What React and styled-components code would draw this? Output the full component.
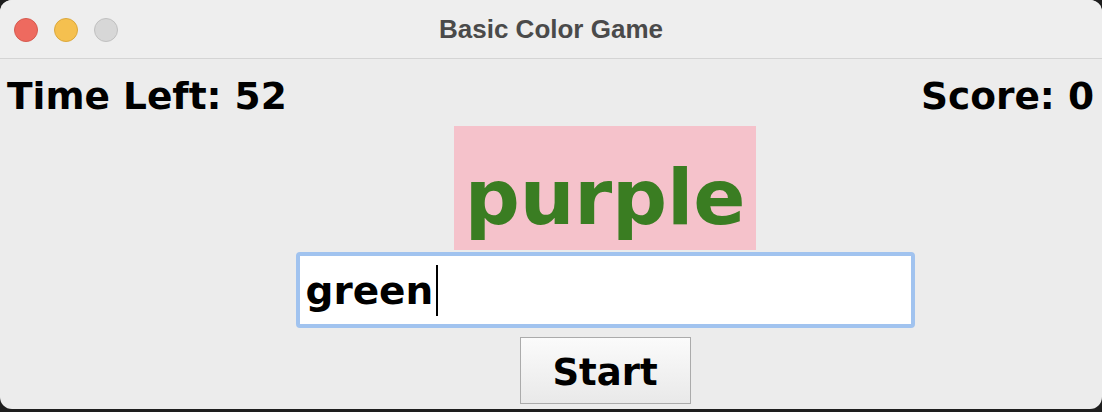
import styled, { createGlobalStyle } from 'styled-components'

const Global = createGlobalStyle`
    html, body {
        margin: 0;
        padding: 0;
        background: #1e1e1e;
    }
    body {
        width: 1102px;
        height: 412px;
        overflow: hidden;
    }
`

const S = {}

S.Window = styled.div`
    width: 1102px;
    height: 409px;
    background: #ececec;
    border-radius: 12px;
    overflow: hidden;
    display: flex;
    flex-direction: column;
`

S.TitleBar = styled.div`
    height: 58px;
    flex: none;
    position: relative;
    display: flex;
    align-items: center;
    justify-content: center;
    background: #eeeeee;
    border-bottom: 1px solid #d4d4d4;
`

S.Lights = styled.div`
    position: absolute;
    left: 14px;
    top: 18px;
    display: flex;
    gap: 16px;
`

S.Light = styled.span`
    width: 22px;
    height: 22px;
    border-radius: 50%;
    background: ${p => p.fill};
    border: 1px solid ${p => p.edge};
`

S.Title = styled.div`
    font-family: 'Liberation Sans', Arial, sans-serif;
    font-weight: bold;
    font-size: 26px;
    color: #4a4a4a;
`

S.Body = styled.div`
    flex: 1;
    display: flex;
    flex-direction: column;
    font-family: 'DejaVu Sans', sans-serif;
    font-weight: bold;
    color: #000;
`

S.Stats = styled.div`
    display: flex;
    justify-content: space-between;
    padding: 15px 8px 0 7px;
    font-size: 37.5px;
    line-height: 44px;
`

S.Center = styled.div`
    display: flex;
    flex-direction: column;
    align-items: center;
    padding-left: 108px;
`

S.Word = styled.div`
    width: 302px;
    height: 124px;
    margin-top: 8px;
    background: #f5c2cb;
    color: #3a7d22;
    font-size: 77px;
    display: flex;
    align-items: flex-end;
    justify-content: center;
    line-height: 1;
    padding-bottom: 14px;
    box-sizing: border-box;
    letter-spacing: -0.2px;
`

S.Entry = styled.div`
    width: 619px;
    height: 76px;
    margin-top: 2px;
    box-sizing: border-box;
    border: 4px solid #a1c3ef;
    border-radius: 4px;
    background: #fff;
    display: flex;
    align-items: center;
    padding-left: 6px;
    font-size: 39px;
`

S.Caret = styled.span`
    width: 2px;
    height: 51px;
    background: #000;
    margin-left: 3px;
`

S.Button = styled.button`
    width: 171px;
    height: 67px;
    margin-top: 9px;
    border: 1px solid #ababab;
    background: linear-gradient(#fbfbfb, #e9e9e9);
    font-family: 'DejaVu Sans', sans-serif;
    font-weight: bold;
    font-size: 37px;
    color: #000;
    padding: 4px 0 0;
`

export default () => (
    <S.Window>
        <Global />
        <S.TitleBar>
            <S.Lights>
                <S.Light fill='#ee6a5f' edge='#d65a4f' />
                <S.Light fill='#f5c04f' edge='#dba83c' />
                <S.Light fill='#d7d7d7' edge='#c0c0c0' />
            </S.Lights>
            <S.Title>Basic Color Game</S.Title>
        </S.TitleBar>
        <S.Body>
            <S.Stats>
                <span>Time Left: 52</span>
                <span>Score: 0</span>
            </S.Stats>
            <S.Center>
                <S.Word>purple</S.Word>
                <S.Entry>
                    green
                    <S.Caret />
                </S.Entry>
                <S.Button>Start</S.Button>
            </S.Center>
        </S.Body>
    </S.Window>
)
